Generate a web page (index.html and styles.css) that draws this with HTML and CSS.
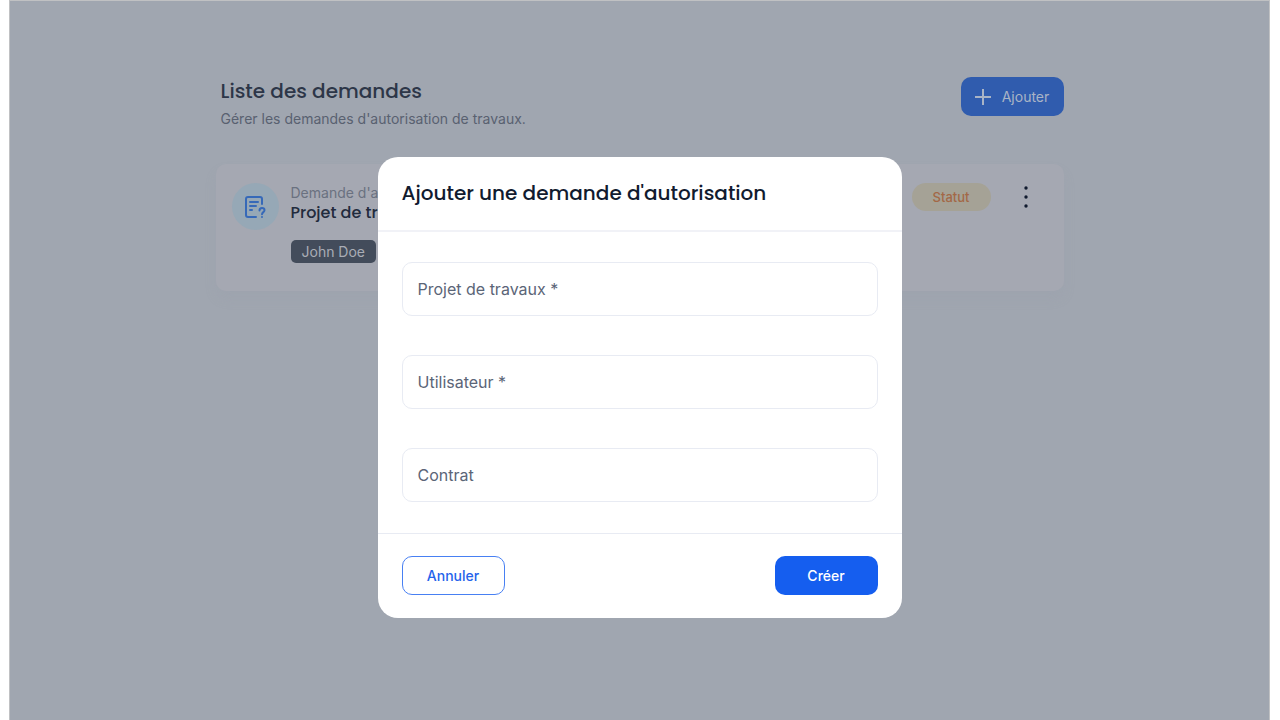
FILE: index.html
```html
<!DOCTYPE html>
<html lang="fr">
<head>
<meta charset="utf-8">
<meta name="viewport" content="width=device-width, initial-scale=1">
<title>Liste des demandes</title>
<link rel="stylesheet" href="styles.css">
</head>
<body>
<div class="screen">
  <main class="content">
    <header class="page-header">
      <div>
        <h1 class="page-title">Liste des demandes</h1>
        <p class="page-subtitle">Gérer les demandes d'autorisation de travaux.</p>
      </div>
      <button class="btn btn-add" type="button">
        <svg width="16" height="16" viewBox="0 0 16 16" fill="none" stroke="currentColor" stroke-width="2" aria-hidden="true"><path d="M8 0v16M0 8h16"/></svg>
        Ajouter
      </button>
    </header>
    <article class="card">
      <div class="card-icon">
        <svg width="24" height="24" viewBox="0 0 24 24" fill="none" stroke="currentColor" stroke-width="2" stroke-linecap="round" stroke-linejoin="round" aria-hidden="true">
          <path d="M19 9V4a2 2 0 0 0-2-2H5a2 2 0 0 0-2 2v16a2 2 0 0 0 2 2h8"/>
          <path d="M7 7h8M7 11h6M7 15h2"/>
          <path d="M16.500 15.500c0-1.500 1-2.500 2.500-2.500s2.500 1 2.500 2.300c0 1.700-2.500 2-2.500 4M19 22v.1"/>
        </svg>
      </div>
      <div class="card-body">
        <p class="card-kind">Demande d'a</p>
        <h2 class="card-title">Projet de tr</h2>
        <span class="tag">John Doe</span>
      </div>
      <span class="status">Statut</span>
      <button class="menu" type="button" aria-label="Options">
        <svg width="4" height="22" viewBox="0 0 4 22" fill="currentColor" aria-hidden="true"><circle cx="2" cy="2" r="1.700"/><circle cx="2" cy="11" r="1.700"/><circle cx="2" cy="20" r="1.700"/></svg>
      </button>
    </article>
  </main>
  <div class="overlay">
    <form class="modal" role="dialog" aria-labelledby="modal-title">
      <header class="modal-header"><h2 class="modal-title" id="modal-title">Ajouter une demande d'autorisation</h2></header>
      <div class="modal-body">
        <div class="field"><input class="field-input" id="projet" type="text"><label class="field-label" for="projet">Projet de travaux *</label></div>
        <div class="field"><input class="field-input" id="utilisateur" type="text"><label class="field-label" for="utilisateur">Utilisateur *</label></div>
        <div class="field"><input class="field-input" id="contrat" type="text"><label class="field-label" for="contrat">Contrat</label></div>
      </div>
      <footer class="modal-footer">
        <button class="btn btn-outline" type="button">Annuler</button>
        <button class="btn btn-primary" type="button">Créer</button>
      </footer>
    </form>
  </div>
</div>
</body>
</html>
```
FILE: styles.css
```css
* { box-sizing: border-box; }
body { margin: 0; background: #fff; font-family: Inter, "Liberation Sans", sans-serif; }
h1, h2, p { margin: 0; }
.screen {
  position: relative;
  min-height: 100vh;
  margin: 0 10px 0 9px;
  background: #a0a6b0;
  border: 1px solid #c0c1c3;
  border-bottom: 0;
}
.content { max-width: 848px; margin: 0 auto; padding-top: 76px; }
.page-header { display: flex; justify-content: space-between; align-items: flex-start; padding-left: 5px; }
.page-title, .card-title, .modal-title { font-family: Poppins, Inter, sans-serif; font-weight: 500; }
.page-title { font-size: 20px; line-height: 28px; color: #2d3648; }
.page-subtitle { margin-top: 4px; font-size: 14px; line-height: 20px; color: #596170; }
.btn {
  display: flex;
  align-items: center;
  justify-content: center;
  height: 39px;
  min-width: 103px;
  border: 0;
  border-radius: 10px;
  font: 500 14px/20px Inter, sans-serif;
}
.btn-add { gap: 11px; background: #305cae; color: #a9b4c6; font-weight: 400; }
.card {
  display: flex;
  align-items: flex-start;
  margin-top: 35px;
  min-height: 127px;
  padding: 19px 36px 28px 16px;
  background: #a5a8b2;
  border-radius: 10px;
  box-shadow: 0 8px 12px rgba(150, 155, 170, 0.15);
}
.card-icon { display: flex; align-items: center; justify-content: center; width: 47px; height: 47px; border-radius: 50%; background: #96a8b6; color: #3669b8; }
.card-body { margin-left: 12px; }
.card-kind { font-size: 14px; line-height: 20px; color: #6a7180; }
.card-title { font-size: 16px; line-height: 20px; color: #222b3d; }
.tag { display: inline-block; margin-top: 17px; padding: 0 11px; border-radius: 5px; background: #434c5b; color: #a9adb6; font-size: 14px; line-height: 23px; }
.status { margin-left: auto; padding: 0 21px; border-radius: 14px; background: #a5a296; color: #a36846; font-size: 13px; font-weight: 500; line-height: 28px; }
.menu { display: flex; margin-left: 33px; padding: 3px 0; border: 0; background: none; color: #111b2f; }
.overlay { position: absolute; inset: 0; display: flex; align-items: flex-start; justify-content: center; padding-top: 156px; }
.modal { width: 100%; max-width: 524px; background: #fff; border-radius: 20px; }
.modal-header { padding: 22px 24px 23px; border-bottom: 2px solid #f1f2f7; }
.modal-title { font-size: 20px; line-height: 28px; color: #111b2f; }
.modal-body { display: flex; flex-direction: column; gap: 39px; padding: 30px 24px 31px; }
.field { position: relative; }
.field-input { display: block; width: 100%; height: 54px; padding: 0 15px; border: 1px solid #e8ebf3; border-radius: 10px; background: #fff; font: 16px/24px Inter, sans-serif; }
.field-label { position: absolute; left: 16px; top: 15px; font-size: 16px; line-height: 24px; color: #5b6577; }
.modal-footer { display: flex; justify-content: space-between; padding: 22px 24px 23px; border-top: 1px solid #e8ebf3; }
.btn-outline { border: 1px solid #4880f3; background: #fff; color: #2563eb; }
.btn-primary { background: #155eef; color: #fff; }
```
